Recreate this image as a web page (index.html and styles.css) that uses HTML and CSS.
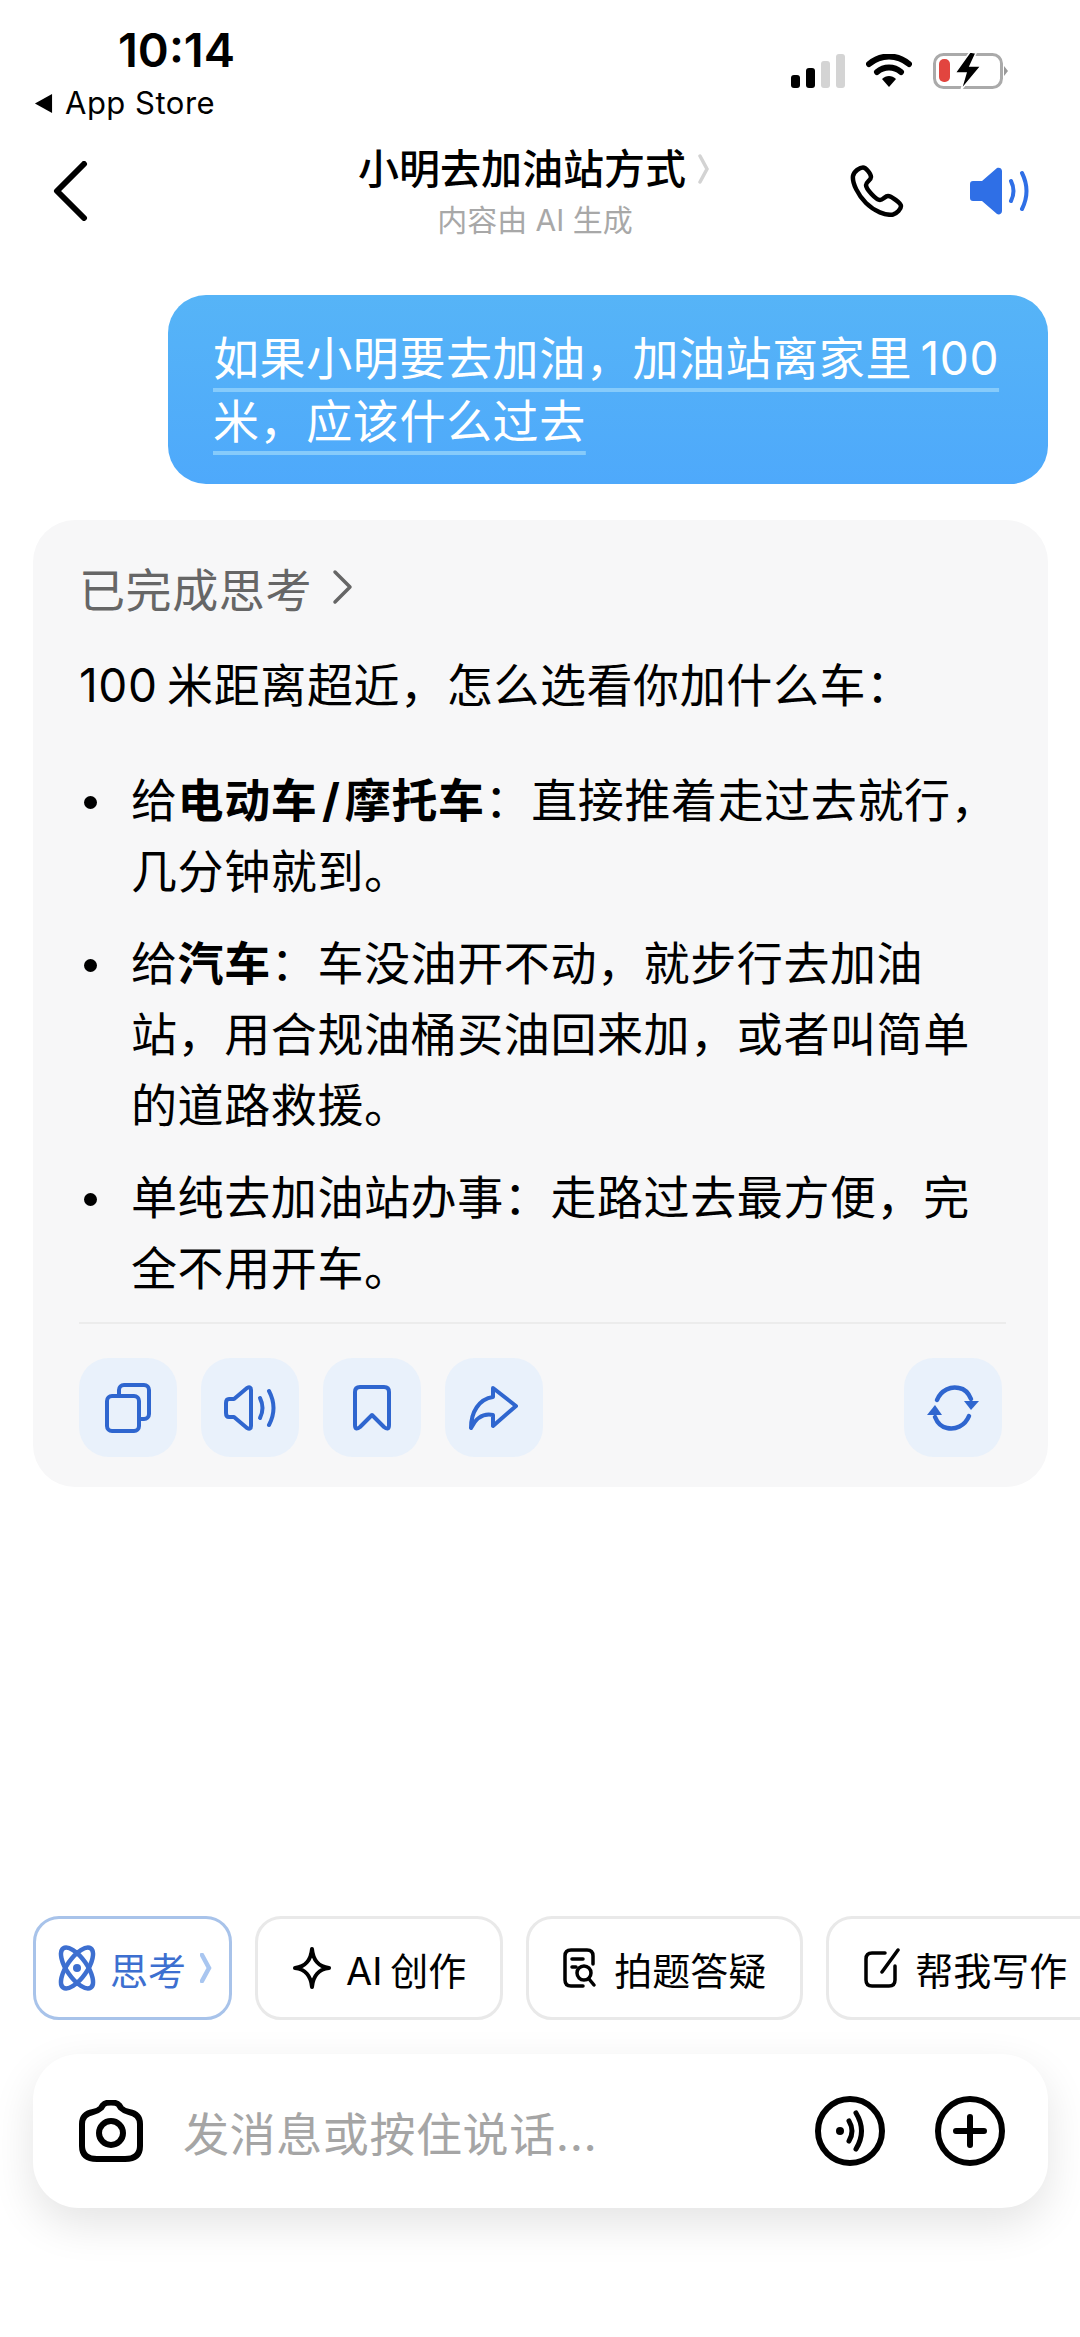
FILE: index.html
```html
<!DOCTYPE html>
<html lang="zh-CN">
<head>
<meta charset="utf-8">
<title>小明去加油站方式</title>
<link rel="stylesheet" href="styles.css">
</head>
<body>
<div class="screen">
  <header class="status">
    <div class="status-left">
      <div class="time">10:14</div>
      <div class="back-app"><svg class="tri" viewBox="0 0 20 22"><path d="M19 1V21L1 11Z"/></svg><span>App Store</span></div>
    </div>
    <div class="status-right">
      <svg class="signal" viewBox="0 0 54 34"><rect x="0" y="21" width="9" height="13" rx="3" fill="#000"/><rect x="15" y="14" width="9" height="20" rx="3" fill="#000"/><rect x="30" y="7" width="9" height="27" rx="3" fill="#d4d4d4"/><rect x="45" y="0" width="9" height="34" rx="3" fill="#d4d4d4"/></svg>
      <svg class="wifi" viewBox="0 0 46 34"><path d="M3 10C15 0 31 0 43 10" fill="none" stroke="#000" stroke-width="6" stroke-linecap="round"/><path d="M11 18C18 12 28 12 35 18" fill="none" stroke="#000" stroke-width="6" stroke-linecap="round"/><path d="M16 25C20 21 26 21 30 25L23 33Z" fill="#000"/></svg>
      <svg class="battery" viewBox="0 0 76 38"><rect x="1.5" y="2.5" width="67" height="33" rx="9" fill="none" stroke="#aaa" stroke-width="3"/><rect x="6" y="7" width="11" height="23" rx="5" fill="#e2453f"/><path d="M71 14L75 19L71 24Z" fill="#999"/><path d="M37 0L22 21H33L28 38L48 14H37L43 1Z" fill="#000" stroke="#fff" stroke-width="1.5"/></svg>
    </div>
  </header>

  <nav class="nav">
    <svg class="back" viewBox="0 0 36 60"><path d="M32 3L5 30L32 57" fill="none" stroke="#000" stroke-width="6" stroke-linecap="round" stroke-linejoin="round"/></svg>
    <div class="nav-center">
      <div class="nav-title"><span>小明去加油站方式</span><svg class="nav-chev" viewBox="0 0 12 30"><path d="M2 2L9 15L2 28" fill="none" stroke="#d3d3d3" stroke-width="3.5" stroke-linecap="round"/></svg></div>
      <div class="nav-sub">内容由 AI 生成</div>
    </div>
    <div class="nav-actions">
      <svg class="phone" viewBox="0 0 54 52"><path d="M13 2.5C10 2.5 4 6 3 11C2 18 8 30 16 38C24 46 36 51 43 49.5C47 48.500 51 44 51 41C51 38 41 31 38 31C35 31 33 35 30 35C26 35 16 24 16 20C16 17 21 15 21 12C21 9 16 2.5 13 2.5Z" fill="none" stroke="#000" stroke-width="4.500" stroke-linejoin="round"/></svg>
      <svg class="speaker-solid" viewBox="0 0 60 48"><path d="M3 14H12L27 1C29 0 32 1 32 4V44C32 47 29 48 27 47L12 34H3C1 34 0 33 0 31V17C0 15 1 14 3 14Z" fill="#2f6fe6"/><path d="M41 14Q46 24 41 34" fill="none" stroke="#2f6fe6" stroke-width="4" stroke-linecap="round"/><path d="M52 6Q61 24 52 42" fill="none" stroke="#2f6fe6" stroke-width="4" stroke-linecap="round"/></svg>
    </div>
  </nav>

  <main class="chat">
    <section class="bubble">
      <p class="bubble-text"><span class="underlined">如果小明要去加油，加油站离家里 100 米，应该什么过去</span></p>
    </section>

    <article class="card">
      <div class="think"><span>已完成思考</span><svg class="think-chev" viewBox="0 0 22 36"><path d="M3 3L18 18L3 33" fill="none" stroke="#666" stroke-width="3.500" stroke-linecap="round" stroke-linejoin="round"/></svg></div>
      <p class="lead">100 米距离超近，怎么选看你加什么车：</p>
      <ul class="answers">
        <li>给<b>电动车 / 摩托车</b>：直接推着走过去就行，几分钟就到。</li>
        <li>给<b>汽车</b>：车没油开不动，就步行去加油站，用合规油桶买油回来加，或者叫简单的道路救援。</li>
        <li>单纯去加油站办事：走路过去最方便，完全不用开车。</li>
      </ul>
      <div class="tools">
        <button class="tool"><svg class="ti-copy" viewBox="0 0 46 50"><rect x="14" y="2" width="30" height="34" rx="5" fill="#e9f1fb" stroke="#2f66cf" stroke-width="4"/><rect x="2" y="13" width="32" height="35" rx="5" fill="#e9f1fb" stroke="#2f66cf" stroke-width="4"/></svg></button>
        <button class="tool"><svg class="ti-sound" viewBox="0 0 54 46"><path d="M3 18Q3 14 6 14H11L24 3Q28 1 28 5V41Q28 45 24 43L11 32H6Q3 32 3 28Z" fill="none" stroke="#2f66cf" stroke-width="4" stroke-linejoin="round"/><path d="M37 13Q42 23 37 33" fill="none" stroke="#2f66cf" stroke-width="4" stroke-linecap="round"/><path d="M46 6Q55 23 46 40" fill="none" stroke="#2f66cf" stroke-width="4" stroke-linecap="round"/></svg></button>
        <button class="tool"><svg class="ti-mark" viewBox="0 0 38 46"><path d="M2 7Q2 2 7 2H31Q36 2 36 7V40Q36 46 31 42L19 30L7 42Q2 46 2 40Z" fill="none" stroke="#2f66cf" stroke-width="4" stroke-linejoin="round"/></svg></button>
        <button class="tool"><svg class="ti-share" viewBox="0 0 50 46"><path d="M24 3L47 21L24 41V30C14 28 7 33 2 43C2 27 10 14 24 12Z" fill="none" stroke="#2f66cf" stroke-width="4" stroke-linejoin="round"/></svg></button>
        <button class="tool tool-end"><svg class="ti-redo" viewBox="0 0 56 48"><path d="M12 16C16 6 26 2 34 4C40 5 44 10 46 15" fill="none" stroke="#2f66cf" stroke-width="4.500" stroke-linecap="round"/><path d="M44 32C40 42 30 46 22 44C16 43 12 38 10 33" fill="none" stroke="#2f66cf" stroke-width="4.500" stroke-linecap="round"/><path d="M39 17H54L46 26Z" fill="#2f66cf"/><path d="M2 31H17L10 21Z" fill="#2f66cf"/></svg></button>
      </div>
    </article>
  </main>

  <div class="chips">
    <div class="chip chip-on"><svg class="chip-atom" viewBox="0 0 42 46"><ellipse cx="21" cy="23" rx="10" ry="24" transform="rotate(-35 21 23)" fill="none" stroke="#3d6fd0" stroke-width="4.500"/><ellipse cx="21" cy="23" rx="10" ry="24" transform="rotate(35 21 23)" fill="none" stroke="#3d6fd0" stroke-width="4.500"/><circle cx="21" cy="23" r="4" fill="#3d6fd0"/></svg><span>思考</span><svg class="chip-chev" viewBox="0 0 12 30"><path d="M2 2L9 15L2 28" fill="none" stroke="#a9c6f0" stroke-width="4.500" stroke-linecap="round"/></svg></div>
    <div class="chip chip-ai"><svg class="chip-star" viewBox="0 0 40 42"><path d="M20 2C21 13 27 20 37 21C27 22 21 29 20 40C19 29 13 22 3 21C13 20 19 13 20 2Z" fill="none" stroke="#000" stroke-width="4" stroke-linejoin="round"/></svg><span>AI 创作</span></div>
    <div class="chip"><svg class="chip-doc" viewBox="0 0 34 40"><path d="M20 38H8Q2 38 2 32V8Q2 2 8 2H24Q30 2 30 8V16" fill="none" stroke="#000" stroke-width="3.500" stroke-linecap="round"/><path d="M9 11H20M9 19H13" stroke="#000" stroke-width="3.500" stroke-linecap="round"/><circle cx="21" cy="25" r="7" fill="none" stroke="#000" stroke-width="3.500"/><path d="M26 31L31 37" stroke="#000" stroke-width="3.500" stroke-linecap="round"/></svg><span>拍题答疑</span></div>
    <div class="chip"><svg class="chip-edit" viewBox="0 0 38 40"><path d="M22 5H9Q3 5 3 11V32Q3 38 9 38H26Q32 38 32 32V18" fill="none" stroke="#000" stroke-width="3.500" stroke-linecap="round"/><path d="M35 2L19 24" stroke="#000" stroke-width="3.500" stroke-linecap="round"/></svg><span>帮我写作</span></div>
  </div>

  <footer class="input">
    <svg class="camera" viewBox="0 0 64 62"><path d="M22 8L24 5Q26 2.500 32 2.500Q38 2.500 40 5L42 8Q45 11 50 12Q61 14 61 24V46Q61 59 46 59H18Q3 59 3 46V24Q3 14 14 12Q19 11 22 8Z" fill="none" stroke="#000" stroke-width="6" stroke-linejoin="round"/><circle cx="32" cy="33" r="12" fill="none" stroke="#000" stroke-width="6"/></svg>
    <span class="placeholder">发消息或按住说话...</span>
    <svg class="round-btn" viewBox="0 0 70 70"><circle cx="35" cy="35" r="32" fill="none" stroke="#000" stroke-width="6"/><circle cx="25" cy="35" r="4" fill="#000"/><path d="M34 25Q40 35 34 45" fill="none" stroke="#000" stroke-width="5" stroke-linecap="round"/><path d="M41 17Q52 35 41 53" fill="none" stroke="#000" stroke-width="5" stroke-linecap="round"/></svg>
    <svg class="round-btn" viewBox="0 0 70 70"><circle cx="35" cy="35" r="32" fill="none" stroke="#000" stroke-width="6"/><path d="M35 21V49M21 35H49" stroke="#000" stroke-width="6" stroke-linecap="round"/></svg>
  </footer>
</div>
</body>
</html>
```
FILE: styles.css
```css
* { box-sizing: border-box; }
html, body { margin: 0; padding: 0; background: #fff; }
body { font-family: Inter, "Noto Sans CJK SC", sans-serif; color: #000; }
svg { display: block; flex: none; }
p, ul { margin: 0; padding: 0; }

.screen { width: 1080px; height: 2337px; overflow: hidden; display: flex; flex-direction: column; background: #fff; }

/* status bar */
.status { height: 128px; flex: none; display: flex; justify-content: space-between; padding: 24px 71px 0 34px; }
.time { font-size: 47px; line-height: 52px; font-weight: 600; padding-left: 84px; }
.back-app { display: flex; align-items: center; gap: 12px; font-size: 31px; line-height: 36px; margin-top: 9px; letter-spacing: .5px; }
.tri { width: 19px; height: 21px; }
.status-right { display: flex; align-items: center; height: 66px; padding-top: 28px; }
.signal { width: 54px; height: 34px; margin-right: 21px; }
.wifi { width: 46px; height: 34px; margin-right: 21px; }
.battery { width: 76px; height: 38px; }

/* nav */
.nav { height: 125px; flex: none; display: grid; grid-template-columns: 1fr auto 1fr; align-items: center; padding: 0 50px 0 52px; }
.back { width: 36px; height: 60px; }
.nav-center { display: flex; flex-direction: column; align-items: center; padding: 2px 14px 0 0; }
.nav-title { display: flex; align-items: center; gap: 12px; font-size: 41px; line-height: 50px; font-weight: 500; }
.nav-chev { width: 12px; height: 30px; }
.nav-sub { font-size: 30px; line-height: 38px; color: #a8a8a8; margin-left: 2px; margin-top: 7px; }
.nav-actions { display: flex; justify-content: flex-end; align-items: center; gap: 66px; }
.phone { width: 54px; height: 52px; }
.speaker-solid { width: 60px; height: 48px; }

/* chat */
.chat { flex: 1; padding: 42px 32px 0 33px; display: flex; flex-direction: column; }
.bubble { margin-left: 135px; height: 189px; padding: 32px 40px 0 45px; border-radius: 38px; background: linear-gradient(#56b4f7, #4ea9fb); }
.bubble-text { font-size: 46px; line-height: 63px; color: #fff; letter-spacing: .6px; word-spacing: -5px; }
.underlined { text-decoration: underline; text-decoration-color: #86cbfb; text-decoration-thickness: 4px; text-underline-offset: 13px; text-decoration-skip-ink: none; }

.card { margin-top: 36px; height: 967px; padding: 37px 42px 0 46px; border-radius: 42px; background: #f7f7f8; }
.think { display: flex; align-items: center; gap: 20px; height: 60px; font-size: 46px; color: #666; letter-spacing: .6px; }
.think-chev { width: 22px; height: 36px; }
.lead { margin-top: 38px; font-size: 46px; line-height: 60px; letter-spacing: .6px; word-spacing: -4px; }
.answers { list-style: none; margin-top: 50px; }
.answers li { position: relative; padding-left: 52px; font-size: 46px; line-height: 71px; margin-bottom: 21px; letter-spacing: .6px; }
.answers li::before { content: ""; position: absolute; left: 5px; top: 31px; width: 13px; height: 13px; border-radius: 50%; background: #000; }
.answers b { font-weight: 700; word-spacing: -7px; }

.tools { display: flex; gap: 24px; border-top: 2px solid #ececec; margin-top: -3px; padding-top: 34px; }
.tool { width: 98px; height: 99px; border: 0; padding: 0; border-radius: 30px; background: #e9f1fb; display: flex; align-items: center; justify-content: center; }
.tool-end { margin-left: auto; margin-right: 4px; }
.ti-copy { width: 46px; height: 50px; }
.ti-sound { width: 54px; height: 46px; }
.ti-mark { width: 38px; height: 46px; }
.ti-share { width: 50px; height: 46px; }
.ti-redo { width: 56px; height: 48px; }

/* chips */
.chips { flex: none; display: flex; gap: 23px; height: 104px; margin-left: 33px; margin-bottom: 34px; width: 1047px; overflow: hidden; }
.chip { flex: none; height: 104px; padding: 0 34px; display: flex; align-items: center; gap: 14px; border: 3px solid #e9e9e9; border-radius: 26px; background: #fff; font-size: 38px; white-space: nowrap; }
.chip-on { border-color: #a8c3ea; color: #3d6fd0; padding: 0 17px 0 20px; gap: 12px; }
.chip-ai { word-spacing: -3px; }
.chip-atom { width: 42px; height: 46px; }
.chip-chev { width: 12px; height: 30px; margin-left: 2px; }
.chip-star { width: 40px; height: 42px; }
.chip-doc { width: 34px; height: 40px; margin-right: 3px; }
.chip-edit { width: 38px; height: 40px; }

/* input */
.input { flex: none; margin: 0 32px 129px 33px; height: 154px; padding: 0 43px 0 46px; display: flex; align-items: center; border-radius: 46px; background: #fff; box-shadow: 0 16px 44px rgba(0, 0, 0, .11); }
.camera { width: 64px; height: 62px; }
.placeholder { flex: 1; margin-left: 40px; font-size: 46px; letter-spacing: .6px; color: #a5a5a5; }
.round-btn { width: 70px; height: 70px; margin-left: 50px; }
```
